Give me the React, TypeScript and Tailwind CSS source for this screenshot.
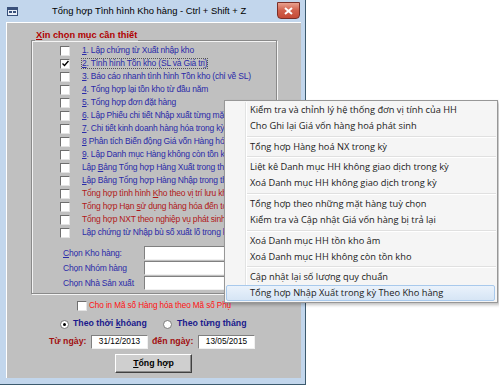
import React from "react"

type Row = { label: React.ReactNode, red?: boolean, checked?: boolean, focus?: boolean }

const U = ({ children }: { children: React.ReactNode }) => <span className="underline">{children}</span>

const rows: Row[] = [
    { label: <><U>1</U>. Lập chứng từ Xuất nhập kho</> },
    { label: <><U>2</U>. Tình hình Tồn kho (SL và Giá trị)</>, checked: true, focus: true },
    { label: <><U>3</U>. Báo cáo nhanh tình hình Tồn kho (chỉ về SL)</> },
    { label: <><U>4</U>. Tổng hợp lại tồn kho từ đầu năm</> },
    { label: <><U>5</U>. Tổng hợp đơn đặt hàng</> },
    { label: <><U>6</U>. Lập Phiếu chi tiết Nhập xuất từng mặt hàng</> },
    { label: <><U>7</U>. Chi tiết kinh doanh hàng hóa trong kỳ</> },
    { label: <><U>8</U> Phân tích Biến động Giá vốn Hàng hóa</> },
    { label: <><U>9</U>. Lập Danh mục Hàng không còn tồn kho</> },
    { label: <>Lập <U>B</U>ảng Tổng hợp Hàng Xuất trong tháng</> },
    { label: <><U>L</U>ập Bảng Tổng hợp Hàng Nhập trong tháng</> },
    { label: <>Tổng hợp tình hình <U>K</U>ho theo vị trí lưu kho</>, red: true },
    { label: <>Tổng hợp Hạn <U>s</U>ử dụng hàng hóa đến tới hạn</>, red: true },
    { label: <>Tổng hợp NXT theo nghiệp vụ phát sinh</>, red: true },
    { label: <>Lập chứng từ Nhập bù số xuất lố trong kỳ</> },
]

const menuGroups: string[][] = [
    ["Kiểm tra và chỉnh lý hệ thống đơn vị tính của HH", "Cho Ghi lại Giá vốn hàng hoá phát sinh"],
    ["Tổng hợp Hàng hoá NX trong kỳ"],
    ["Liệt kê Danh mục HH không giao dịch trong kỳ", "Xoá Danh mục HH không giao dịch trong kỳ"],
    ["Tổng hợp theo những mặt hàng tuỳ chọn", "Kiểm tra và Cập nhật Giá vốn hàng bị trả lại"],
    ["Xoá Danh mục HH tồn kho âm", "Xoá Danh mục HH không còn tồn kho"],
    ["Cập nhật lại số lượng quy chuẩn", "Tổng hợp Nhập Xuất trong kỳ Theo Kho hàng"],
]

const CheckBox = ({ checked }: { checked?: boolean }) => (
    <div className="w-[10px] h-[10px] shrink-0 bg-white border-t border-l border-[#6e6e6e] border-r-[#e4e4e4] border-b-[#e4e4e4] border-r border-b flex items-center justify-center">
        {checked && (
            <svg width="7" height="7" viewBox="0 0 7 7">
                <path d="M0.5 3.5 L2.5 5.5 L6.5 1" stroke="#000" strokeWidth="1.4" fill="none" />
            </svg>
        )}
    </div>
)

const Radio = ({ checked }: { checked?: boolean }) => (
    <div className="w-[9px] h-[9px] shrink-0 rounded-full bg-white border border-[#7a7a7a] flex items-center justify-center">
        {checked && <div className="w-[3px] h-[3px] rounded-full bg-black" />}
    </div>
)

const TextBox = ({ className, children }: { className: string, children?: React.ReactNode }) => (
    <div className={"shrink-0 bg-white border-t border-l border-[#808080] border-r border-b border-r-[#f0f0f0] border-b-[#f0f0f0] flex items-center justify-center text-[8.25px] text-black " + className}>
        {children}
    </div>
)

export default function App() {
    return (
        <div className="relative w-[499px] h-[386px] bg-white overflow-hidden font-['Liberation_Sans',Arial,sans-serif]">
            {/* window */}
            <div className="w-[306px] h-[385px] flex flex-col bg-[#c2d6ec] border-r border-b border-[#3c5a6e] pl-[6px] pr-[4px] pb-[6px]">
                <div className="h-[22px] flex items-center shrink-0">
                    <div className="ml-[1px] w-[11px] h-[9px] bg-[#e8eef6] border border-[#39507a] flex flex-col">
                        <div className="h-[2px] bg-[#39507a]" />
                        <div className="flex-1 flex items-center justify-center gap-[1px]">
                            <div className="w-[3px] h-[2px] bg-[#39507a]" />
                            <div className="w-[3px] h-[2px] bg-[#39507a]" />
                        </div>
                    </div>
                    <div className="ml-[34px] text-[9.4px] text-black whitespace-nowrap">
                        Tổng hợp Tình hình Kho hàng - Ctrl + Shift + Z
                    </div>
                    <div className="ml-auto mr-[1px] self-start mt-[2px] w-[23px] h-[17px] rounded-b-[4px] border border-[#7a2f28] bg-gradient-to-b from-[#e8a08e] via-[#d0604c] to-[#c54a36] flex items-center justify-center">
                        <svg width="9" height="8" viewBox="0 0 9 8">
                            <path d="M1 1 L8 7 M8 1 L1 7" stroke="#fff" strokeWidth="2" />
                        </svg>
                    </div>
                </div>
                <div className="flex-1 bg-[#c0c0c0] border-l border-t border-white flex flex-col">
                    {/* group box */}
                    <div className="relative ml-[24px] mt-[17px] w-[246px] h-[254px] border border-[#8a8a8a] shadow-[1px_1px_0_#f4f4f4,inset_1px_1px_0_#f4f4f4]">
                        <div className="absolute left-[3px] -top-[11px] px-[1px] bg-[#c0c0c0] text-[9.25px] font-bold text-[#b00000] leading-[11px] whitespace-nowrap">
                            <U>X</U>in chọn mục cần thiết
                        </div>
                        <div className="h-full pt-[3px] flex flex-col">
                            {rows.map((r, i) => (
                                <div key={i} className="h-[13px] shrink-0 flex items-center">
                                    <div className="ml-[28px]"><CheckBox checked={r.checked} /></div>
                                    <div className={"ml-[11px] whitespace-nowrap text-[8.5px] tracking-[-0.2px] leading-[9px] " + (r.red ? "text-[#b01818] " : "text-[#2a2aa8] ") + (r.focus ? "border border-dotted border-[#555]" : "border border-transparent")}>
                                        {r.label}
                                    </div>
                                </div>
                            ))}
                            <div className="mt-[7px] flex flex-col gap-[1px]">
                                {[<><U>C</U>họn Kho hàng:</>, <>Chọn Nhóm hàng</>, <>Chọn Nhà Sản xuất</>].map((l, i) => (
                                    <div key={i} className="h-[14px] flex items-center">
                                        <div className="ml-[31px] w-[81px] shrink-0 text-[8.5px] tracking-[-0.2px] text-[#2a2aa8] whitespace-nowrap">{l}</div>
                                        <TextBox className="w-[120px] h-[14px]" />
                                    </div>
                                ))}
                            </div>
                        </div>
                    </div>
                    <div className="mt-[6px] h-[12px] flex items-center">
                        <div className="ml-[70px]"><CheckBox /></div>
                        <div className="ml-[2px] text-[8.2px] tracking-[-0.1px] text-[#ff1010] whitespace-nowrap">Cho in Mã số Hàng hóa theo Mã số Phụ</div>
                    </div>
                    <div className="mt-[6px] h-[12px] flex items-center text-[8.75px] font-bold text-[#1a1a8c] whitespace-nowrap">
                        <div className="ml-[53px]"><Radio checked /></div>
                        <div className="ml-[4px] w-[90px]">Theo thời <U>k</U>hỏang</div>
                        <Radio />
                        <div className="ml-[5px]">Theo từng tháng</div>
                    </div>
                    <div className="mt-[5px] h-[14px] flex items-center text-[8.75px] font-bold text-[#a01010] whitespace-nowrap">
                        <div className="ml-[42px] w-[42px]">Từ ngày:</div>
                        <TextBox className="w-[57px] h-[14px] font-normal">31/12/2013</TextBox>
                        <div className="ml-[4px] w-[46px]">đến ngày:</div>
                        <TextBox className="w-[57px] h-[14px] font-normal">13/05/2015</TextBox>
                    </div>
                    <div className="mt-[5px] ml-[108px] w-[77px] h-[19px] bg-[#cfcfcf] border border-t-white border-l-white border-r-[#404040] border-b-[#404040] shadow-[inset_-1px_-1px_0_#8a8a8a] flex items-center justify-center text-[8.75px] font-bold text-black">
                        <span><U>T</U>ổng hợp</span>
                    </div>
                </div>
            </div>

            {/* popup menu */}
            <div className="absolute left-[224px] top-[100px] w-[274px] h-[203px] bg-[#f5f5f5] border border-[#979797] shadow-[2px_2px_3px_rgba(0,0,0,0.25)] py-[1px] flex flex-col text-[9.25px] text-[#1a1a1a] font-['Open_Sans',sans-serif]">
                <div className="absolute left-[20px] top-[1px] bottom-[1px] w-[1px] bg-[#e2e3e3] shadow-[1px_0_0_#fff]" />
                {menuGroups.map((g, gi) => (
                    <React.Fragment key={gi}>
                        {gi > 0 && (
                            <div className="h-[5px] flex items-center pl-[22px] pr-[1px]">
                                <div className="flex-1 h-[1px] bg-[#e0e0e0] shadow-[0_1px_0_#fff]" />
                            </div>
                        )}
                        {g.map((item, ii) => {
                            const hot = gi === menuGroups.length - 1 && ii === g.length - 1
                            return (
                                <div key={ii} className={"relative h-[16px] flex items-center pl-[23px] whitespace-nowrap mx-[1px] rounded-[2px] " + (hot ? "bg-gradient-to-b from-[#eaf2fb] to-[#d6e5f5] border border-[#a8c9ec] mr-[2px]" : "border border-transparent")}>
                                    {item}
                                </div>
                            )
                        })}
                    </React.Fragment>
                ))}
            </div>
        </div>
    )
}
